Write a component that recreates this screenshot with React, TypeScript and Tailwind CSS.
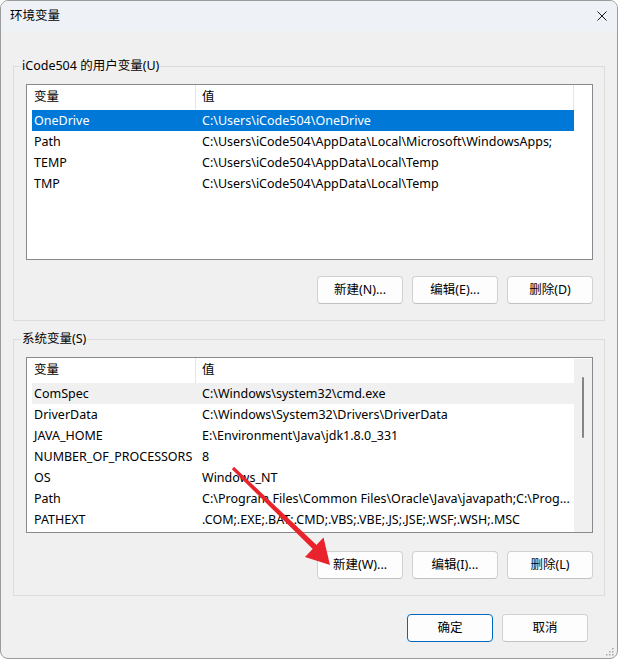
import React from 'react';

type Row = { name: string; value: string; state?: 'selected' | 'hover' };

const userVars: Row[] = [
  { name: 'OneDrive', value: String.raw`C:\Users\iCode504\OneDrive`, state: 'selected' },
  { name: 'Path', value: String.raw`C:\Users\iCode504\AppData\Local\Microsoft\WindowsApps;` },
  { name: 'TEMP', value: String.raw`C:\Users\iCode504\AppData\Local\Temp` },
  { name: 'TMP', value: String.raw`C:\Users\iCode504\AppData\Local\Temp` },
];

const systemVars: Row[] = [
  { name: 'ComSpec', value: String.raw`C:\Windows\system32\cmd.exe`, state: 'hover' },
  { name: 'DriverData', value: String.raw`C:\Windows\System32\Drivers\DriverData` },
  { name: 'JAVA_HOME', value: String.raw`E:\Environment\Java\jdk1.8.0_331` },
  { name: 'NUMBER_OF_PROCESSORS', value: '8' },
  { name: 'OS', value: 'Windows_NT' },
  { name: 'Path', value: String.raw`C:\Program Files\Common Files\Oracle\Java\javapath;C:\Prog...` },
  { name: 'PATHEXT', value: '.COM;.EXE;.BAT;.CMD;.VBS;.VBE;.JS;.JSE;.WSF;.WSH;.MSC' },
];

const Button = ({ label, primary = false }: { label: string; primary?: boolean }) => (
  <button
    type="button"
    className={
      primary
        ? 'w-[86px] h-[28px] rounded-[4px] border border-[#0067c0] bg-[#fdfdfd] text-[12.5px] text-black'
        : 'w-[86px] h-[28px] rounded-[4px] border border-[#d1d1d1] border-b-[#c2c2c2] bg-[#fdfdfd] text-[12.5px] text-black'
    }
  >
    {label}
  </button>
);

const VarList = ({ rows, scroll = false }: { rows: Row[]; scroll?: boolean }) => (
  <div className="w-[567px] h-[176px] border border-[#868a8f] bg-white flex">
    <div className="w-[547px] pl-[5px]">
      <div className="flex h-[25px] items-center">
        <div className="w-[164px] h-full flex items-center pl-[2px] border-r border-[#e5e5e5]">变量</div>
        <div className="flex-1 h-full flex items-center pl-[6px]">值</div>
      </div>
      {rows.map((r) => (
        <div
          key={r.name}
          className={
            r.state === 'selected'
              ? 'flex h-[21px] w-[542px] items-center pt-[1px] bg-[#0078d7] text-white'
              : r.state === 'hover'
                ? 'flex h-[21px] w-[542px] items-center pt-[1px] bg-[#f0f0f0]'
                : 'flex h-[21px] w-[542px] items-center pt-[1px]'
          }
        >
          <div className="w-[164px] pl-[2px] overflow-hidden whitespace-nowrap">{r.name}</div>
          <div className="flex-1 pl-[6px] overflow-hidden whitespace-nowrap">{r.value}</div>
        </div>
      ))}
    </div>
    {scroll ? (
      <div className="w-[18px] bg-[#f0f0f0] flex justify-center pt-[18px] mt-[1px]">
        <div className="w-[2px] h-[61px] rounded-full bg-[#858585]" />
      </div>
    ) : (
      <div className="w-[18px]">
        <div className="w-[1px] h-[25px] bg-[#e5e5e5] -ml-[1px]" />
      </div>
    )}
  </div>
);

const Group = ({ title, rows, buttons, scroll, gap }: { title: string; rows: Row[]; buttons: string[]; scroll?: boolean; gap: string }) => (
  <fieldset className="border border-[#dcdcdc] pl-[12px] pr-[11px] pt-[10px] pb-[16px] min-w-0">
    <legend className="-ml-[5px] px-[1px] leading-[16px]">{title}</legend>
    <VarList rows={rows} scroll={scroll} />
    <div className={`flex justify-end gap-[9px] ${gap}`}>
      {buttons.map((b) => (
        <Button key={b} label={b} />
      ))}
    </div>
  </fieldset>
);

export default function App() {
  return (
    <div className="relative w-[618px] h-[659px] bg-white font-['Noto_Sans','Noto_Sans_CJK_SC',sans-serif] text-[12.5px] text-black">
      <div className="h-full flex flex-col bg-[#f0f0f0] border border-[#9b9b9b] rounded-[8px] overflow-hidden">
        <div className="h-[30px] shrink-0 bg-[#eef2f6] flex items-center justify-between pl-[9px] pr-[10px]">
          <span className="leading-[16px]">环境变量</span>
          <svg width="10" height="10" viewBox="0 0 10 10">
            <path d="M0.5 0.5 L9.5 9.5 M9.5 0.5 L0.5 9.5" stroke="#1a1a1a" strokeWidth="1" />
          </svg>
        </div>
        <div className="flex-1 px-[12px]">
          <div className="mt-[27px]">
            <Group
              title="iCode504 的用户变量(U)"
              rows={userVars}
              buttons={['新建(N)...', '编辑(E)...', '删除(D)']}
              gap="mt-[16px]"
            />
          </div>
          <div className="mt-[10px]">
            <Group
              title="系统变量(S)"
              rows={systemVars}
              buttons={['新建(W)...', '编辑(I)...', '删除(L)']}
              scroll
              gap="mt-[18px]"
            />
          </div>
          <div className="flex justify-end gap-[9px] mt-[18px] pr-[17px]">
            <Button label="确定" primary />
            <Button label="取消" />
          </div>
        </div>
      </div>

      {/* resize grip */}
      <svg className="absolute right-[4px] bottom-[3px]" width="9" height="9" viewBox="0 0 9 9">
        {[
          [7, 1], [4, 4], [7, 4], [1, 7], [4, 7], [7, 7],
        ].map(([x, y]) => (
          <rect key={`${x}-${y}`} x={x} y={y} width="1.5" height="1.5" fill="#a8a8a8" />
        ))}
      </svg>

      {/* red annotation arrow */}
      <svg className="absolute inset-0 pointer-events-none" width="618" height="659" viewBox="0 0 618 659">
        <polygon points="234,466.8 231.9,469.2 313.3,549.6 317.1,545.6" fill="#e8232b" />
        <polygon points="305,557 323.5,537.5 330,565" fill="#e8232b" />
      </svg>
    </div>
  );
}
